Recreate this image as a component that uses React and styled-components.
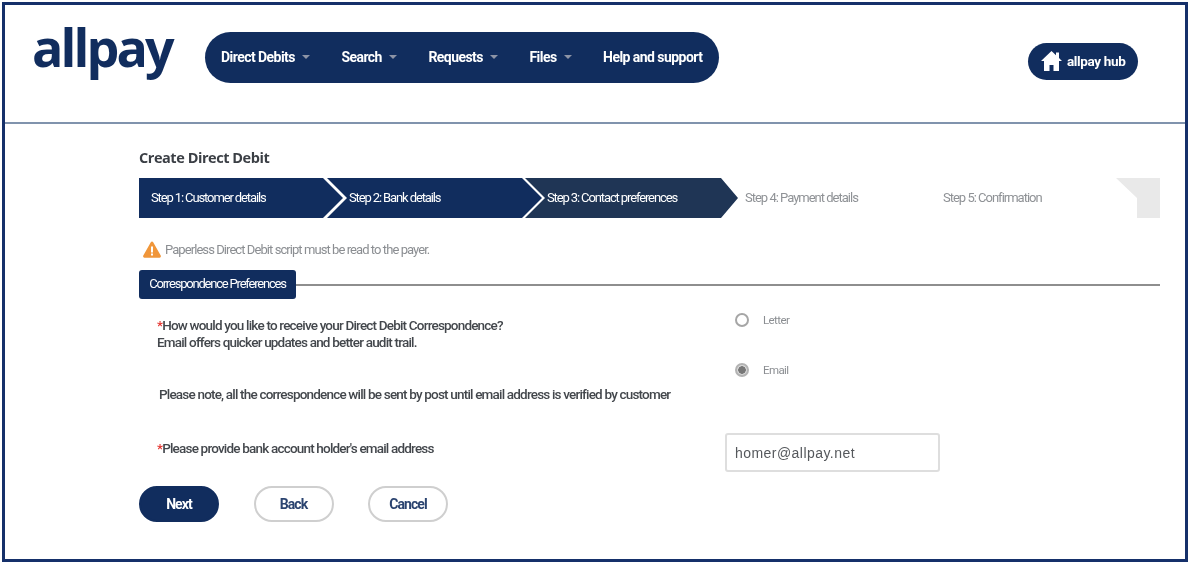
import React from 'react';
import styled, { createGlobalStyle } from 'styled-components';

const NAVY = '#112d5e';
const BODY_FONT = 'Roboto, "Liberation Sans", sans-serif';

const GlobalStyle = createGlobalStyle`
  html, body {
    margin: 0;
    padding: 0;
    background: #fff;
  }
  * {
    box-sizing: border-box;
  }
`;

/* the reference is an upscaled capture, hence the slight softening */
const Page = styled.div`
  width: 1190px;
  height: 564px;
  padding: 2px;
  background: #fff;
  overflow: hidden;
  font-family: ${BODY_FONT};
  filter: blur(0.4px);
`;

const Frame = styled.div`
  height: 100%;
  border: 3px solid #15306a;
  display: flex;
  flex-direction: column;
`;

const Header = styled.header`
  height: 119px;
  flex: none;
  border-bottom: 2px solid #8093ad;
  display: flex;
  align-items: flex-start;
  padding: 27px 47px 0 27px;
`;

const Logo = styled.div`
  width: 173px;
  flex: none;
  font-family: "Open Sans", sans-serif;
  font-size: 52px;
  font-weight: 700;
  line-height: 30px;
  letter-spacing: -2.9px;
  color: ${NAVY};
`;

const Nav = styled.nav`
  width: 514px;
  height: 51px;
  border-radius: 26px;
  background: ${NAVY};
  display: flex;
  align-items: center;
  gap: 31.5px;
  padding: 0 16px 1px;
  flex: none;
`;

const NavItem = styled.a`
  display: flex;
  align-items: center;
  gap: 7px;
  color: #fff;
  font-size: 14px;
  font-weight: 700;
  letter-spacing: -0.55px;
  white-space: nowrap;
`;

const Caret = styled.span`
  width: 0;
  height: 0;
  border-left: 4px solid transparent;
  border-right: 4px solid transparent;
  border-top: 4px solid #8d94a6;
`;

const HubButton = styled.a`
  margin: 11px 0 0 auto;
  width: 110px;
  height: 37px;
  border-radius: 19px;
  background: ${NAVY};
  color: #fff;
  display: flex;
  align-items: center;
  gap: 5px;
  padding: 0 0 1px 13px;
  font-size: 13.5px;
  font-weight: 700;
  letter-spacing: -0.35px;
  white-space: nowrap;
`;

const Main = styled.main`
  flex: 1;
  padding: 24px 25px 0 134px;
`;

const Title = styled.h1`
  margin: 0;
  height: 30px;
  font-family: "Open Sans", sans-serif;
  font-size: 14.5px;
  font-weight: 700;
  line-height: 20px;
  letter-spacing: -0.45px;
  color: #3b3f45;
`;

const Stepper = styled.div`
  display: flex;
  height: 40px;
`;

const stepClip = {
  first: 'polygon(0 0, 184px 0, 204px 50%, 184px 100%, 0 100%)',
  second: 'polygon(0 0, 195px 0, 215px 50%, 195px 100%, 0 100%, 20px 50%)',
  third: 'polygon(0 0, 196px 0, 213px 50%, 196px 100%, 0 100%, 20px 50%)',
};

const stepWidth = { first: 206, second: 216, third: 216, todo: 198 };

const Step = styled.div`
  flex: ${p => (p.$kind === 'last' ? '1' : 'none')};
  width: ${p => (stepWidth[p.$kind] ? `${stepWidth[p.$kind]}px` : 'auto')};
  margin-right: ${p => (stepClip[p.$kind] ? -18 : 0)}px;
  padding: 0 0 2px ${p => (p.$kind === 'first' ? 12 : 22)}px;
  display: flex;
  align-items: center;
  font-size: 13px;
  letter-spacing: ${p => (stepClip[p.$kind] ? -1.12 : -1)}px;
  white-space: nowrap;
  color: ${p => (stepClip[p.$kind] ? '#fff' : '#8f9296')};
  background: ${p => (!stepClip[p.$kind] ? 'transparent' : p.$kind === 'third' ? '#1f3555' : NAVY)};
  clip-path: ${p => stepClip[p.$kind] || 'none'};
`;

const StepEnd = styled.div`
  width: 44px;
  flex: none;
  background: #e9e9e9;
  clip-path: polygon(0 0, 100% 0, 100% 100%, 21px 100%, 21px 50%);
`;

const Notice = styled.div`
  display: flex;
  align-items: center;
  gap: 4px;
  margin: 21px 0 0 4px;
  height: 20px;
  font-size: 13px;
  letter-spacing: -0.93px;
  color: #8b8e92;
`;

const SectionHead = styled.div`
  display: flex;
  align-items: center;
  margin-top: 11px;
`;

const SectionTab = styled.div`
  width: 157px;
  height: 29px;
  flex: none;
  border-radius: 3px;
  background: ${NAVY};
  color: #fff;
  font-size: 13px;
  letter-spacing: -1.2px;
  display: flex;
  align-items: center;
  justify-content: center;
  padding-bottom: 2px;
  white-space: nowrap;
`;

const SectionRule = styled.div`
  flex: 1;
  height: 2px;
  background: #8e8e8e;
`;

const FormGrid = styled.div`
  display: grid;
  grid-template-columns: 568px 1fr;
  padding-left: 18px;
`;

const Question = styled.p`
  margin: ${p => p.$top}px 0 0 ${p => p.$indent || 0}px;
  font-size: 13.5px;
  font-weight: 500;
  line-height: 17px;
  letter-spacing: -0.81px;
  color: #43474c;
  white-space: nowrap;
`;

const Required = styled.span`
  color: #e5342f;
`;

const RadioColumn = styled.div`
  display: flex;
  flex-direction: column;
  gap: 36px;
  padding: 14px 0 0 10px;
`;

const RadioRow = styled.label`
  display: flex;
  align-items: center;
  gap: 14px;
  height: 14px;
  font-size: 11.5px;
  letter-spacing: -0.6px;
  color: #8b8e92;
`;

const RadioDot = styled.span`
  width: 14px;
  height: 14px;
  flex: none;
  border-radius: 50%;
  border: 2px solid ${p => (p.$on ? '#b3b3b3' : '#a6a6a6')};
  background: ${p => (p.$on ? 'radial-gradient(circle, #777 0 3.5px, #d8d8d8 4px)' : '#fff')};
`;

const EmailInput = styled.div`
  width: 215px;
  height: 39px;
  margin-top: 56px;
  border: 2px solid #dedede;
  border-radius: 3px;
  padding-left: 8px;
  display: flex;
  align-items: center;
  font-family: "Liberation Sans", sans-serif;
  font-size: 14px;
  letter-spacing: 0.45px;
  color: #55585c;
`;

const ButtonRow = styled.div`
  display: flex;
  gap: 34.5px;
  margin-top: 14px;
`;

const Button = styled.button`
  width: 80px;
  height: 36px;
  padding: 0;
  border-radius: 18px;
  border: 2px solid ${p => (p.$primary ? NAVY : '#cfcfcf')};
  background: ${p => (p.$primary ? NAVY : '#fff')};
  color: ${p => (p.$primary ? '#fff' : '#2b4470')};
  font-family: ${BODY_FONT};
  font-size: 14px;
  font-weight: 700;
  letter-spacing: -0.9px;
`;

const HomeIcon = () => (
  <svg width="21" height="20" viewBox="0 0 21 20">
    <path fill="#fff" d="M10.5 0 0 10h3v10h5.5v-6h4v6H18V10h3l-3-2.9V1.5h-3v2.8z" />
  </svg>
);

const WarningIcon = () => (
  <svg width="18" height="17" viewBox="0 0 18 17">
    <path fill="#f0963a" d="M7.8 1.2a1.4 1.4 0 0 1 2.4 0l7.5 13.4a1.4 1.4 0 0 1-1.2 2.1H1.5a1.4 1.4 0 0 1-1.2-2.1z" />
    <rect x="8" y="5.5" width="2" height="6" fill="#fff" />
    <rect x="8" y="12.5" width="2" height="2" fill="#fff" />
  </svg>
);

const navItems = [
  { label: 'Direct Debits', caret: true },
  { label: 'Search', caret: true },
  { label: 'Requests', caret: true },
  { label: 'Files', caret: true },
  { label: 'Help and support' },
];

export default function App() {
  return (
    <Page>
      <GlobalStyle />
      <Frame>
        <Header>
          <Logo>allpay</Logo>
          <Nav>
            {navItems.map(item => (
              <NavItem key={item.label}>
                {item.label}
                {item.caret && <Caret />}
              </NavItem>
            ))}
          </Nav>
          <HubButton>
            <HomeIcon />
            allpay hub
          </HubButton>
        </Header>
        <Main>
          <Title>Create Direct Debit</Title>
          <Stepper>
            <Step $kind="first">Step 1: Customer details</Step>
            <Step $kind="second">Step 2: Bank details</Step>
            <Step $kind="third">Step 3: Contact preferences</Step>
            <Step $kind="todo">Step 4: Payment details</Step>
            <Step $kind="last">Step 5: Confirmation</Step>
            <StepEnd />
          </Stepper>
          <Notice>
            <WarningIcon />
            Paperless Direct Debit script must be read to the payer.
          </Notice>
          <SectionHead>
            <SectionTab>Correspondence Preferences</SectionTab>
            <SectionRule />
          </SectionHead>
          <FormGrid>
            <div>
              <Question $top={18}>
                <Required>*</Required>How would you like to receive your Direct Debit Correspondence?
                <br />
                Email offers quicker updates and better audit trail.
              </Question>
              <Question $top={35} $indent={2}>
                Please note, all the correspondence will be sent by post until email address is verified by customer
              </Question>
              <Question $top={37}>
                <Required>*</Required>Please provide bank account holder's email address
              </Question>
            </div>
            <div>
              <RadioColumn>
                <RadioRow>
                  <RadioDot />
                  Letter
                </RadioRow>
                <RadioRow>
                  <RadioDot $on />
                  Email
                </RadioRow>
              </RadioColumn>
              <EmailInput>homer@allpay.net</EmailInput>
            </div>
          </FormGrid>
          <ButtonRow>
            <Button $primary>Next</Button>
            <Button>Back</Button>
            <Button>Cancel</Button>
          </ButtonRow>
        </Main>
      </Frame>
    </Page>
  );
}
